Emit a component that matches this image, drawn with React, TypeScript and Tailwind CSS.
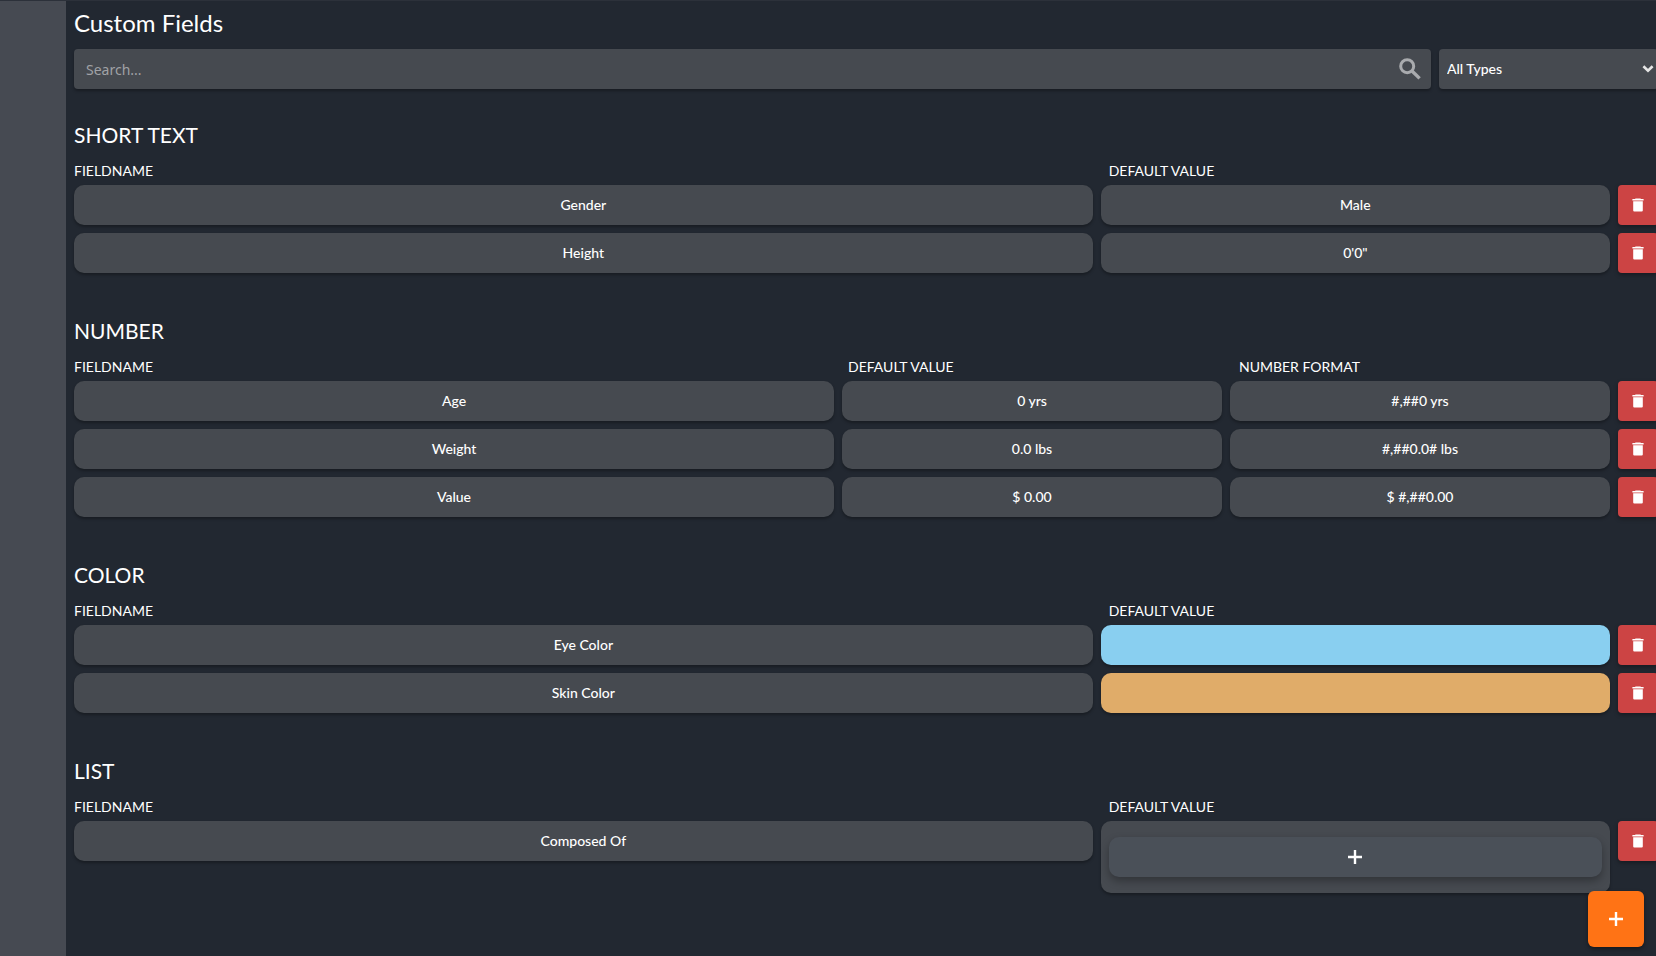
type Cell = { text?: string; tone?: "blue" | "tan"; list?: boolean };
type Section = { title: string; headers: string[]; rows: Cell[][] };

const sections: Section[] = [
  {
    title: "SHORT TEXT",
    headers: ["FIELDNAME", "DEFAULT VALUE"],
    rows: [
      [{ text: "Gender" }, { text: "Male" }],
      [{ text: "Height" }, { text: "0'0\"" }],
    ],
  },
  {
    title: "NUMBER",
    headers: ["FIELDNAME", "DEFAULT VALUE", "NUMBER FORMAT"],
    rows: [
      [{ text: "Age" }, { text: "0 yrs" }, { text: "#,##0 yrs" }],
      [{ text: "Weight" }, { text: "0.0 lbs" }, { text: "#,##0.0# lbs" }],
      [{ text: "Value" }, { text: "$ 0.00" }, { text: "$ #,##0.00" }],
    ],
  },
  {
    title: "COLOR",
    headers: ["FIELDNAME", "DEFAULT VALUE"],
    rows: [
      [{ text: "Eye Color" }, { tone: "blue" }],
      [{ text: "Skin Color" }, { tone: "tan" }],
    ],
  },
  {
    title: "LIST",
    headers: ["FIELDNAME", "DEFAULT VALUE"],
    rows: [[{ text: "Composed Of" }, { list: true }]],
  },
];

const columns = (count: number) =>
  count === 3 ? "grid-cols-[2fr_1fr_1fr]" : "grid-cols-[2fr_1fr]";

const box = "h-10 w-full rounded-[10px] shadow-[0_2px_3px_rgba(0,0,0,0.3)]";

function PlusIcon() {
  return (
    <svg viewBox="0 0 16 16" className="size-4" fill="none" stroke="currentColor" strokeWidth="2.4">
      <path d="M8 1v14M1 8h14" />
    </svg>
  );
}

function TrashIcon() {
  return (
    <svg viewBox="0 0 12 14" className="h-[14px] w-3" fill="currentColor">
      <path d="M3.6 0.4h4.8l.6.6h2.6v1.4H.4V1H3z" />
      <path d="M1.2 3.2h9.6v9.2a1.1 1.1 0 0 1-1.1 1.1H2.3a1.1 1.1 0 0 1-1.1-1.1z" />
    </svg>
  );
}

function SearchIcon() {
  return (
    <svg
      viewBox="0 0 22 22"
      className="size-[22px] text-[#a9abae]"
      fill="none"
      stroke="currentColor"
      strokeWidth="3"
    >
      <circle cx="8.2" cy="8.2" r="6.5" />
      <path d="M13 13l7.6 7.4" strokeWidth="3.4" />
    </svg>
  );
}

function FieldCell({ cell, label }: { cell: Cell; label: string }) {
  if (cell.list) {
    return (
      <div className="rounded-[10px] bg-[#464a50] px-2 py-4 shadow-[0_2px_3px_rgba(0,0,0,0.3)]">
        <button
          type="button"
          aria-label="Add list item"
          className="flex h-10 w-full items-center justify-center rounded-[10px] bg-[#4a5058] text-white shadow-[0_4px_8px_rgba(0,0,0,0.3)]"
        >
          <PlusIcon />
        </button>
      </div>
    );
  }
  if (cell.tone) {
    const fill = cell.tone === "blue" ? "bg-[#89cff0]" : "bg-[#e0ac69]";
    return <button type="button" aria-label={label} className={`${box} ${fill}`} />;
  }
  return (
    <input
      aria-label={label}
      defaultValue={cell.text}
      className={`${box} min-w-0 bg-[#464a50] pb-[2px] text-center text-sm font-medium text-white outline-none`}
    />
  );
}

function FieldSection({ section }: { section: Section }) {
  const grid = columns(section.headers.length);
  return (
    <section>
      <h2 className="text-[21px] leading-7">{section.title}</h2>
      <div className={`mt-[10px] mr-9 grid gap-2 text-sm leading-6 ${grid}`}>
        {section.headers.map((header) => (
          <span key={header}>{header}</span>
        ))}
      </div>
      <div className="mt-[2px] flex flex-col gap-2">
        {section.rows.map((row, index) => (
          <div key={index} className="flex items-start gap-2">
            <div className={`grid min-w-0 flex-1 items-start gap-2 ${grid}`}>
              {row.map((cell, i) => (
                <FieldCell key={i} cell={cell} label={section.headers[i]} />
              ))}
            </div>
            <button
              type="button"
              aria-label={`Delete ${row[0].text}`}
              className="flex size-10 shrink-0 items-center justify-center rounded bg-[#cc4444] text-white shadow-[0_2px_4px_rgba(0,0,0,0.35)]"
            >
              <TrashIcon />
            </button>
          </div>
        ))}
      </div>
    </section>
  );
}

export default function App() {
  return (
    <div className="flex min-h-screen overflow-hidden border-t border-[#2c313a] bg-[#222831] font-['Lato','Open_Sans',sans-serif] text-white">
      <aside className="w-[66px] shrink-0 bg-[#464a52]" />
      <main className="-mr-[2px] min-w-0 flex-1 pt-[6px] pl-2">
        <h1 className="text-2xl leading-8">Custom Fields</h1>
        <div className="mt-[10px] flex gap-2">
          <label className="flex h-10 min-w-0 flex-1 items-center rounded bg-[#464a50] pr-[10px] pl-3 shadow-[0_2px_3px_rgba(0,0,0,0.3)]">
            <input
              type="search"
              aria-label="Search fields"
              placeholder="Search..."
              className="min-w-0 flex-1 bg-transparent pt-[2px] font-['Noto_Sans',sans-serif] text-sm outline-none placeholder:text-[#a0a2a6]"
            />
            <SearchIcon />
          </label>
          <div className="relative w-[219px] shrink-0">
            <select
              aria-label="Field type"
              className="h-10 w-full appearance-none rounded bg-[#464a50] px-2 text-sm font-medium shadow-[0_2px_3px_rgba(0,0,0,0.3)] outline-none"
            >
              <option>All Types</option>
              <option>Short Text</option>
              <option>Number</option>
              <option>Color</option>
              <option>List</option>
            </select>
            <svg
              viewBox="0 0 12 8"
              className="pointer-events-none absolute top-4 right-1 h-2 w-3"
              fill="none"
              stroke="#e6e6e6"
              strokeWidth="2.6"
            >
              <path d="M1.4 1.2L6 5.6l4.6-4.4" />
            </svg>
          </div>
        </div>
        <div className="mt-8 flex flex-col gap-11">
          {sections.map((section) => (
            <FieldSection key={section.title} section={section} />
          ))}
        </div>
      </main>
      <button
        type="button"
        aria-label="Add custom field"
        className="fixed right-3 bottom-[9px] flex size-14 items-center justify-center rounded-md bg-[#ff7315] text-white shadow-[0_2px_4px_rgba(0,0,0,0.4)]"
      >
        <PlusIcon />
      </button>
    </div>
  );
}
